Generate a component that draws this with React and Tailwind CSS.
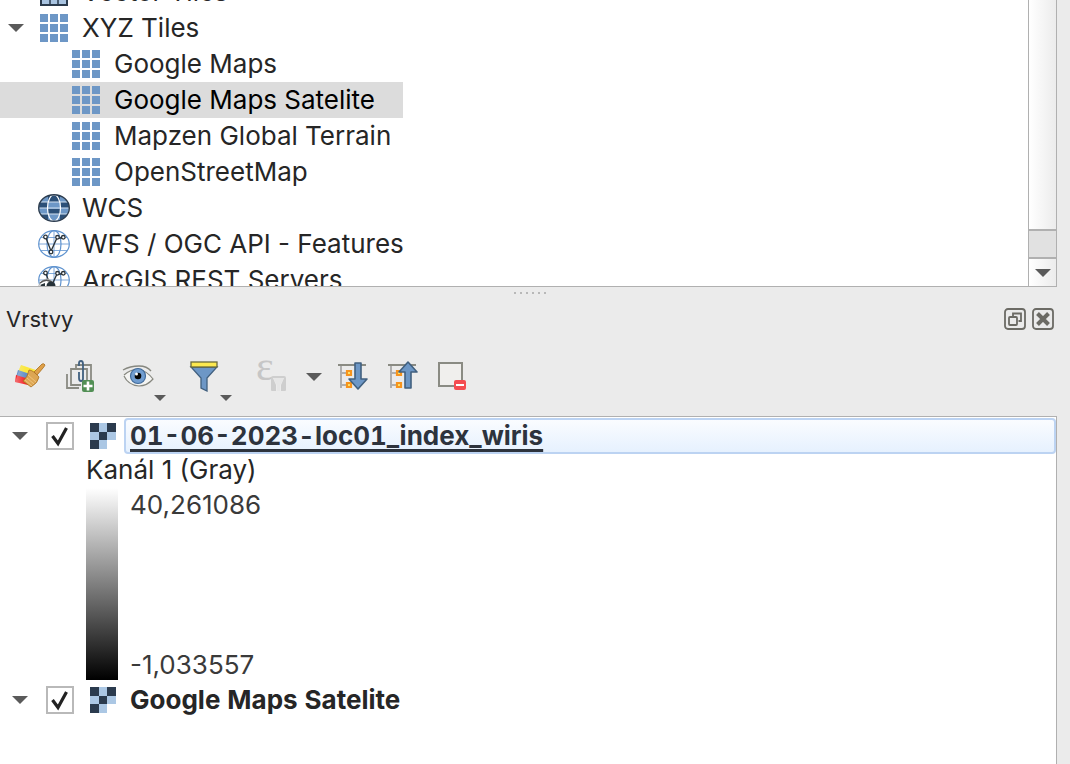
import React, { useState } from "react";

const xyzLayers = [
  { name: "Google Maps" },
  { name: "Google Maps Satelite", selected: true },
  { name: "Mapzen Global Terrain" },
  { name: "OpenStreetMap" },
];

// Icons
function Triangle({ className = "w-4 h-2" }) {
  return (
    <svg viewBox="0 0 16 8" className={className} fill="#5a5a5a">
      <path d="M0 0H16L8 8Z" />
    </svg>
  );
}

function VectorTilesIcon() {
  return (
    <svg viewBox="0 0 28 28" className="w-7 h-7">
      <rect x="1" y="1" width="26" height="26" fill="#a9c4e1" stroke="#2b3b4d" strokeWidth="2" />
      <path d="M10 0V28M18 0V28M0 10H28M0 18H28" stroke="#2b3b4d" strokeWidth="1.5" />
    </svg>
  );
}

function TilesIcon() {
  return (
    <svg viewBox="0 0 28 28" className="w-7 h-7" fill="#6d97c6">
      <path d="M0 0h8v8H0zM10 0h8v8h-8zM20 0h8v8h-8zM0 10h8v8H0zM10 10h8v8h-8zM20 10h8v8h-8zM0 20h8v8H0zM10 20h8v8h-8zM20 20h8v8h-8z" />
    </svg>
  );
}

function WcsIcon() {
  return (
    <svg viewBox="0 0 32 28" className="w-8 h-7">
      <clipPath id="globe">
        <ellipse cx="16" cy="14" rx="15" ry="13" />
      </clipPath>
      <g clipPath="url(#globe)">
        <rect width="32" height="28" fill="#6d97c6" />
        <path d="M10 0h12v8H10zM0 8h10v6H0zM22 8h10v6H22zM10 15h12v5H10zM0 20h10v8H0zM22 20h10v8H22z" fill="#2c5078" />
        <path d="M0 8H32M0 14H32M0 20H32" stroke="#d5e2f0" strokeWidth="1" />
        <ellipse cx="16" cy="14" rx="6.5" ry="13" fill="none" stroke="#fff" strokeWidth="1.2" />
      </g>
      <ellipse cx="16" cy="14" rx="15.3" ry="13.3" fill="none" stroke="#2b3b4d" strokeWidth="1.4" />
    </svg>
  );
}

function WfsIcon({ arcgis }) {
  return (
    <svg viewBox="0 0 32 28" className="w-8 h-7" fill="none">
      <g stroke="#5f93cf" strokeWidth="1.2">
        <ellipse cx="16" cy="14" rx="15.3" ry="13.3" fill="#fff" />
        <ellipse cx="16" cy="14" rx="7" ry="13.3" />
        <path d="M3 7.5H29M1 14H31M3 20.5H29M16 1V27" strokeWidth="0.8" />
      </g>
      <g stroke="#2b3338" strokeWidth="1.3" fill="#fff">
        <path d="M8 8L13 21L19 8H25" fill="none" />
        <circle cx="7.5" cy="7" r="1.8" />
        <circle cx="19.5" cy="7.3" r="1.8" />
        <circle cx="25.3" cy="7.3" r="1.8" />
        <circle cx="13" cy="22" r="1.8" />
      </g>
      {arcgis && (
        <g>
          <path d="M1 19Q4 13 10 13Q17 15 19 28H1Z" fill="#fff" stroke="#aaa" />
          <path d="M2 17Q9 11 16 18" stroke="#555" strokeWidth="1.3" />
          <circle cx="13" cy="20" r="4.5" fill="#263238" />
          <path d="M2 19l5-2v6z" fill="#263238" />
        </g>
      )}
    </svg>
  );
}

function RasterIcon() {
  return (
    <svg viewBox="0 0 26 26" className="w-[26px] h-[26px] shrink-0" shapeRendering="crispEdges">
      <path d="M9 0h8v9H9zM0 9h9v8H0zM17 9h9v8h-9zM9 17h8v9H9z" fill="#abc7e4" />
      <path d="M0 0h9v9H0zM17 0h9v9h-9zM9 9h8v8H9zM0 17h9v9H0z" fill="#2b3b4e" />
    </svg>
  );
}

function StyleIcon() {
  return (
    <svg viewBox="0 0 32 32" className="w-8 h-8">
      <defs>
        <linearGradient id="fade" x1="0" y1="0" x2="1" y2="0">
          <stop offset="0" stopColor="#ebebeb" stopOpacity="0.4" />
          <stop offset="0.5" stopColor="#ebebeb" stopOpacity="0" />
        </linearGradient>
      </defs>
      <path d="M7 5L22 10L19 16L4 12Z" fill="#fbe83d" />
      <path d="M4 10L19 15L16 20L2 17Z" fill="#6590c9" />
      <path d="M2 15L15 19L14 25L1 22Z" fill="#f52328" />
      <path d="M7 5L22 10L14 25L1 22Z" fill="url(#fade)" />
      <path d="M20 12L28 4Q30 3 31 5Q31 6 23 15Z" fill="#dfa048" stroke="#a96e1d" strokeWidth=".8" />
      <path d="M15 10Q19 10 25 17Q24 23 17 27L9 21Q14 17 15 10Z" fill="#dda653" stroke="#a96e1d" strokeWidth=".8" />
      <path d="M11 20l7 6M13 18l7 6M14 15l8 7" stroke="#f3cb88" strokeWidth=".8" />
    </svg>
  );
}

function AddGroupIcon() {
  return (
    <svg viewBox="0 0 32 32" className="w-8 h-8" fill="none">
      <path d="M12 8V5H27V20M7 9H23V20M7 8V25H17M3 14V28H15" stroke="#8a8b83" strokeWidth="1.8" />
      <path d="M15 6V3Q15 1 17 1Q19 1 19 4V19Q19 21 17 21Q15 21 15 18V12" stroke="#41607f" strokeWidth="1.8" />
      <rect x="18" y="20" width="12" height="12" rx="2" fill="#528f55" />
      <path d="M24 21.500V30.500M19.500 26H28.500" stroke="#fff" strokeWidth="2.600" />
    </svg>
  );
}

function EyeIcon() {
  return (
    <svg viewBox="0 0 32 32" className="w-8 h-8" fill="none">
      <path
        d="M2 15Q9 9 17 9.500Q25 11 31 19Q25 26 17 26Q6 25 2 16"
        fill="#f4f4f2"
        stroke="#86877f"
        strokeWidth="1.2"
      />
      <path d="M1 10Q8 6 17 6Q25 6 29 11" stroke="#86877f" strokeWidth="1.3" />
      <circle cx="16" cy="16" r="7.500" fill="#719dd0" stroke="#416b9b" strokeWidth="1.200" />
      <circle cx="16" cy="16" r="3.300" fill="#050505" />
      <circle cx="14.500" cy="14" r="1.500" fill="#fff" />
    </svg>
  );
}

function FilterIcon() {
  return (
    <svg viewBox="0 0 32 32" className="w-8 h-8" stroke="#41607f" strokeWidth="1.3">
      <path d="M3 7H29L19 18V31L13 28V18Z" fill="#6d97c6" />
      <rect x="3" y="2" width="26" height="5" fill="#fce94f" stroke="#6a6b3d" />
    </svg>
  );
}

function ExpressionIcon() {
  return (
    <svg viewBox="0 0 32 32" className="w-8 h-8 overflow-visible">
      <text x="0" y="20" fontFamily="Liberation Serif, serif" fontSize="42" fill="#c6c6c6">ε</text>
      <path d="M17 16H28Q30 16 30 18V30Q30 31 29 31H25V25L28 18H17L20 25V31H16Q15 31 15 30V18Q15 16 17 16Z" fill="#cecece" />
      <path d="M17 18H28L24 25V31H21V25Z" fill="#e6e6e6" />
    </svg>
  );
}

function TreeArrowIcon({ up }) {
  return (
    <svg viewBox="0 0 32 32" className="w-8 h-8" fill="none">
      <path d="M2 5H30" stroke="#8a8b83" strokeWidth="2" />
      <path d="M5 6V28M5 13H10M5 25H10" stroke="#afafaf" strokeWidth="2" />
      <path d="M11 11h4v4h-4zM11 23h4v4h-4z" fill="#fbea70" stroke="#f7941d" strokeWidth="2.200" />
      <path
        d={up ? "M22 2L31 12H25V28H19V12H13Z" : "M19 3H25V19H31L22 29L13 19H19Z"}
        fill="#6d97c6"
        stroke="#41607f"
        strokeWidth="1.6"
        strokeLinejoin="round"
      />
    </svg>
  );
}

function RemoveIcon() {
  return (
    <svg viewBox="0 0 32 32" className="w-8 h-8">
      <rect x="3" y="3" width="23" height="23" fill="#f0efed" stroke="#8a8b83" strokeWidth="2" />
      <rect x="18" y="20" width="12" height="10" rx="2" fill="#f44c50" />
      <rect x="20" y="24" width="8" height="2" fill="#fff" />
    </svg>
  );
}

function FloatIcon() {
  return (
    <svg viewBox="0 0 22 22" className="w-[22px] h-[22px]" fill="none" stroke="#6c6b65">
      <rect x="1" y="1" width="20" height="20" rx="3" strokeWidth="1.8" />
      <path d="M9 8V5.500H17V13H14.500" strokeWidth="1.800" />
      <rect x="5" y="9" width="8" height="8" rx="1" strokeWidth="1.8" />
    </svg>
  );
}

function CloseIcon() {
  return (
    <svg viewBox="0 0 22 22" className="w-[22px] h-[22px]" fill="none" stroke="#6c6b65">
      <rect x="1" y="1" width="20" height="20" rx="3" strokeWidth="1.8" />
      <path d="M5.500 5.500L16.500 16.500M16.500 5.500L5.500 16.500" strokeWidth="4" />
    </svg>
  );
}

function TreeRow({ icon, name, child, open, selected }) {
  return (
    <li className="flex h-9">
      <div
        className={
          "flex items-center h-9 pr-7 " +
          (child ? "pl-[72px] gap-[14px] " : "pl-2 ") +
          (selected ? "bg-[#dcdcdc] text-black" : "")
        }
      >
        {!child && (
          <span className="w-7 shrink-0">{open && <Triangle />}</span>
        )}
        {child ? icon : <span className="flex justify-center w-9 mr-[10px]">{icon}</span>}
        <span className="whitespace-nowrap">{name}</span>
      </div>
    </li>
  );
}

function LayerRow({ name, active }) {
  const [checked, setChecked] = useState(true);
  return (
    <div className="flex items-center h-9 pl-3">
      <button aria-label="Expand" className="w-[34px] shrink-0">
        <Triangle />
      </button>
      <span className="grid place-items-center shrink-0 w-7 h-7 mr-4">
        <input
          type="checkbox"
          aria-label={name}
          checked={checked}
          onChange={() => setChecked(!checked)}
          className="peer appearance-none col-start-1 row-start-1 w-7 h-7 border-2 border-[#b9b9b9] bg-white"
        />
        <svg
          viewBox="0 0 28 28"
          className="hidden peer-checked:block col-start-1 row-start-1 w-7 h-7 pointer-events-none"
          fill="none"
          stroke="#222"
          strokeWidth="3.2"
        >
          <path d="M6.500 14L12 21.500L20.500 6" />
        </svg>
      </span>
      <RasterIcon />
      <span
        className={
          "flex items-center flex-1 h-9 ml-2 border-2 pl-1 rounded-sm font-bold whitespace-nowrap tabular-nums " +
          (active
            ? "border-[#bcd3f2] bg-linear-to-b from-[#fafcff] to-[#e6f1fe] text-[#2d333d] underline decoration-[3px] underline-offset-4"
            : "border-transparent")
        }
      >
        {name}
      </span>
    </div>
  );
}

function Toolbar() {
  return (
    <div className="flex items-start h-14 pl-[14px] mt-[25px]">
      <button title="Style" className="mr-[18px]"><StyleIcon /></button>
      <button title="Add group" className="mr-[26px]"><AddGroupIcon /></button>
      <button title="Visibility" className="flex items-end w-11 h-[41px] mr-[22px]">
        <span className="self-start"><EyeIcon /></span>
        <Triangle className="w-3 h-[6px] shrink-0" />
      </button>
      <button title="Filter" className="flex items-end w-11 h-[41px] mr-6">
        <span className="self-start"><FilterIcon /></span>
        <Triangle className="w-3 h-[6px] shrink-0" />
      </button>
      <button title="Filter by expression" disabled className="mr-[18px]"><ExpressionIcon /></button>
      <button title="Expression options" className="flex items-center h-[34px] mr-[14px]"><Triangle /></button>
      <button title="Expand all" className="mr-[18px]"><TreeArrowIcon /></button>
      <button title="Collapse all" className="mr-[18px]"><TreeArrowIcon up /></button>
      <button title="Remove layer"><RemoveIcon /></button>
    </div>
  );
}

export default function App() {
  return (
    <div className="flex flex-col h-screen overflow-hidden pr-[13px] bg-[#ebebeb] text-[#262626] font-['Inter',sans-serif] text-[26px] leading-8">
      {/* Browser panel */}
      <section className="flex shrink-0 h-[287px] overflow-hidden border-r border-b border-[#b0b0b0] bg-white">
        <ul className="flex-1 -mt-[26px]">
          <TreeRow icon={<VectorTilesIcon />} name="Vector Tiles" />
          <TreeRow icon={<TilesIcon />} name="XYZ Tiles" open />
          {xyzLayers.map((l) => (
            <TreeRow key={l.name} icon={<TilesIcon />} name={l.name} selected={l.selected} child />
          ))}
          <TreeRow icon={<WcsIcon />} name="WCS" />
          <TreeRow icon={<WfsIcon />} name="WFS / OGC API - Features" />
          <TreeRow icon={<WfsIcon arcgis />} name="ArcGIS REST Servers" />
        </ul>
        <div className="flex flex-col w-7 border-l border-[#b0b0b0] bg-linear-to-r from-white to-[#ececec]">
          <div className="flex-1" />
          <div className="h-[30px] border-y-2 border-[#b0b0b0] bg-[#e1e1e1]" />
          <button aria-label="Scroll down" className="flex items-center justify-center h-[27px]">
            <Triangle />
          </button>
        </div>
      </section>

      {/* Splitter */}
      <div className="flex justify-center gap-1 pt-[5px] pl-[2px] h-4">
        {[0, 1, 2, 3, 4, 5].map((i) => (
          <span key={i} className="w-[2px] h-[2px] bg-[#b8b8b8]" />
        ))}
      </div>

      {/* Layers panel */}
      <header className="flex items-center justify-between h-8 pl-[6px] pr-[3px]">
        <h2 className="text-[22px]">Vrstvy</h2>
        <div className="flex gap-[6px]">
          <button aria-label="Float"><FloatIcon /></button>
          <button aria-label="Close"><CloseIcon /></button>
        </div>
      </header>
      <Toolbar />
      <section className="flex-1 pt-px border-t border-r border-[#b0b0b0] bg-white">
        <LayerRow name="01-06-2023-loc01_index_wiris" active />
        <p className="pl-[86px] h-[34px]">Kanál 1 (Gray)</p>
        <div className="flex gap-3 h-48 pl-[86px] mb-[2px]">
          <div className="w-8 bg-linear-to-b/srgb from-white to-black" />
          <div className="flex flex-col justify-between mt-px -mb-px text-[#3a3a3a]">
            <span>40,261086</span>
            <span>-1,033557</span>
          </div>
        </div>
        <LayerRow name="Google Maps Satelite" />
      </section>
    </div>
  );
}
